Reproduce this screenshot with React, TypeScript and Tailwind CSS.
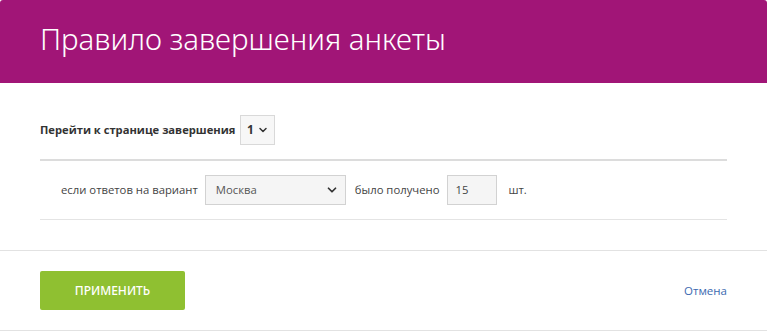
import { ChevronDown } from 'lucide-react';

export default function App() {
  return (
    <div className="h-[331px] w-[767px] bg-white font-['Open_Sans',sans-serif]">
      <div className="w-[767px] overflow-hidden rounded-t-[3px] border-b border-[#e2e2e2]">
        <header className="flex h-[83px] items-center bg-[#a11577] px-10 pb-1">
          <h1 className="font-['Noto_Sans',sans-serif] text-[29.5px] font-light text-white">
            Правило завершения анкеты
          </h1>
        </header>

        <section className="pl-10 pr-[40px] pt-8">
          <div className="flex items-center gap-[5px] pb-[14px]">
            <span className="text-[11.2px] font-bold text-[#333]">Перейти к странице завершения</span>
            <div className="flex h-[30px] w-[35px] items-center justify-center gap-[3px] border border-[#d9d9d9] bg-[#f7f7f7] text-[12px] font-bold text-[#333]">
              1
              <ChevronDown className="h-3 w-3" strokeWidth={3} />
            </div>
          </div>
          <div className="h-[2px] bg-[#dcdcdc]" />

          <div className="flex items-center py-[14px] pl-[21px] text-[11.3px] text-[#444]">
            <span>если ответов на вариант</span>
            <div className="ml-[7px] flex h-[30px] w-[141px] items-center justify-between border border-[#d2d2d2] bg-[#f5f5f5] pl-[10px] pr-[6px] text-[#555]">
              Москва
              <ChevronDown className="h-3.5 w-3.5 text-[#333]" strokeWidth={3} />
            </div>
            <span className="ml-[9px]">было получено</span>
            <div className="ml-[8px] flex h-[30px] w-[50px] items-center border border-[#d2d2d2] bg-[#f5f5f5] pl-[7px] text-[#444]">
              15
            </div>
            <span className="ml-[11px]">шт.</span>
          </div>
          <div className="h-px bg-[#e4e4e4]" />
        </section>

        <div className="mt-[30px] h-px bg-[#e2e2e2]" />

        <footer className="flex items-center justify-between pb-[20px] pl-10 pr-[40px] pt-[20px]">
          <button className="h-[39px] w-[145px] rounded-[2px] bg-[#8fc031] font-['Noto_Sans',sans-serif] text-[12px] font-medium text-white">
            ПРИМЕНИТЬ
          </button>
          <a className="text-[11.5px] text-[#3b6ab0]">Отмена</a>
        </footer>
      </div>
    </div>
  );
}
